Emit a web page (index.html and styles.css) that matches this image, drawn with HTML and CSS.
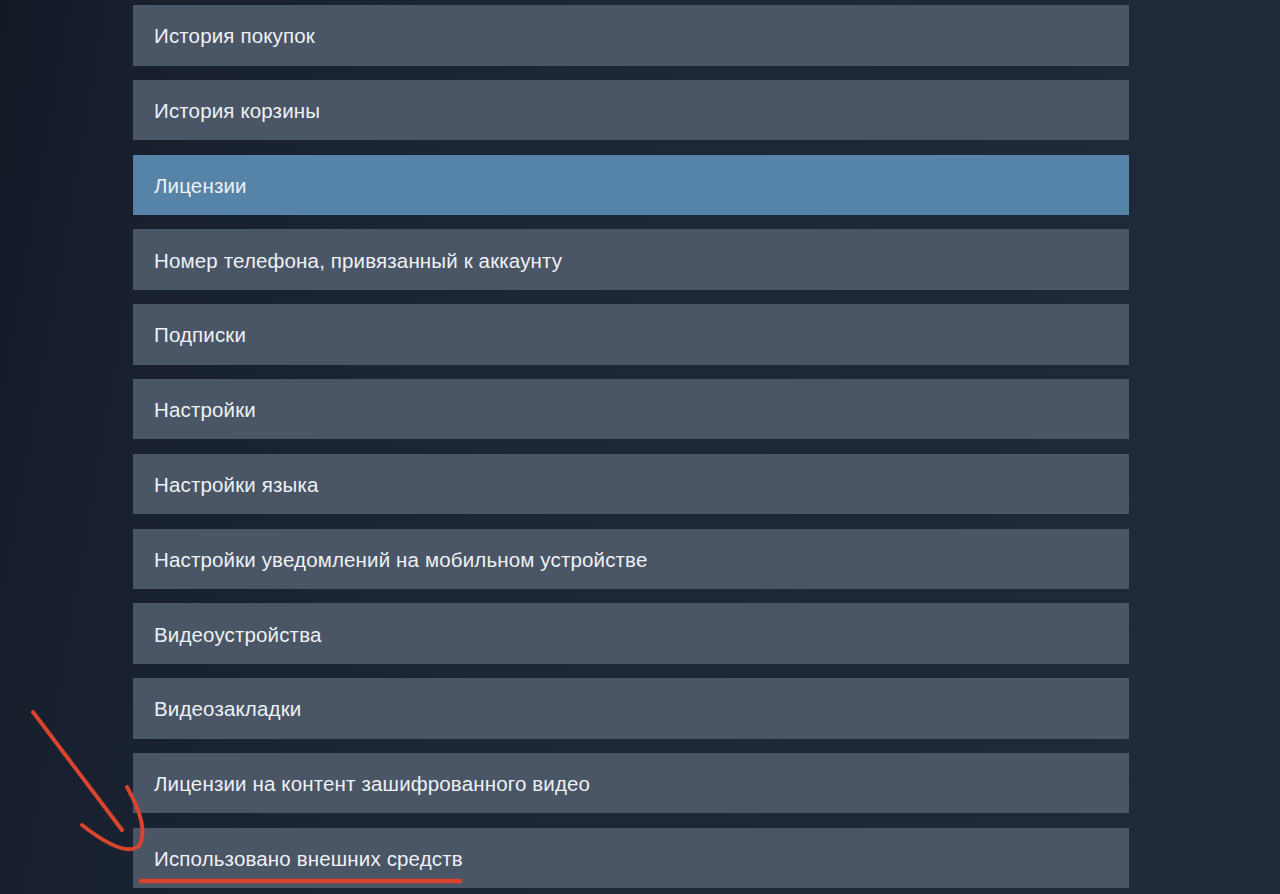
FILE: index.html
```html
<!DOCTYPE html>
<html lang="ru">
<head>
<meta charset="utf-8">
<title>Аккаунт</title>
<link rel="stylesheet" href="styles.css">
</head>
<body>
<main class="page">
  <ul class="menu">
    <li class="menu-item">История покупок</li>
    <li class="menu-item">История корзины</li>
    <li class="menu-item is-active">Лицензии</li>
    <li class="menu-item">Номер телефона, привязанный к аккаунту</li>
    <li class="menu-item">Подписки</li>
    <li class="menu-item">Настройки</li>
    <li class="menu-item">Настройки языка</li>
    <li class="menu-item">Настройки уведомлений на мобильном устройстве</li>
    <li class="menu-item">Видеоустройства</li>
    <li class="menu-item">Видеозакладки</li>
    <li class="menu-item">Лицензии на контент зашифрованного видео</li>
    <li class="menu-item">Использовано внешних средств</li>
  </ul>
  <svg class="annotation" width="1280" height="894" viewBox="0 0 1280 894">
    <path d="M33 712 L122 830" />
    <path d="M127 787 Q150 828 139 846 Q124 858 82 825" />
    <path d="M139 881 L462 881" class="underline" />
  </svg>
</main>
</body>
</html>
```
FILE: styles.css
```css
html, body {
  margin: 0;
  padding: 0;
}
body {
  width: 1280px;
  height: 894px;
  overflow: hidden;
  background: linear-gradient(100deg, #121925 0%, #18202e 10%, #1c2637 40%, #1f2a3b 100%);
  font-family: "Liberation Sans", Arial, sans-serif;
}
.page {
  position: relative;
  height: 894px;
  padding: 5px 0 0 133px;
  box-sizing: border-box;
}
.menu {
  list-style: none;
  margin: 0;
  padding: 0;
  width: 996px;
  display: flex;
  flex-direction: column;
  gap: 14.3px;
}
.menu-item {
  height: 60.5px;
  box-sizing: border-box;
  display: flex;
  align-items: center;
  padding: 2px 0 0 21px;
  background: #4a5566;
  color: #eef1f4;
  font-size: 20.5px;
  letter-spacing: 0.15px;
}
.menu-item.is-active {
  background: #5683a8;
}
.annotation {
  position: absolute;
  left: 0;
  top: 0;
  pointer-events: none;
}
.annotation path {
  fill: none;
  stroke: #d8442d;
  stroke-width: 4;
  stroke-linecap: round;
  stroke-linejoin: round;
}
.annotation .underline {
  stroke-width: 4.5;
  stroke-linecap: butt;
}
```
